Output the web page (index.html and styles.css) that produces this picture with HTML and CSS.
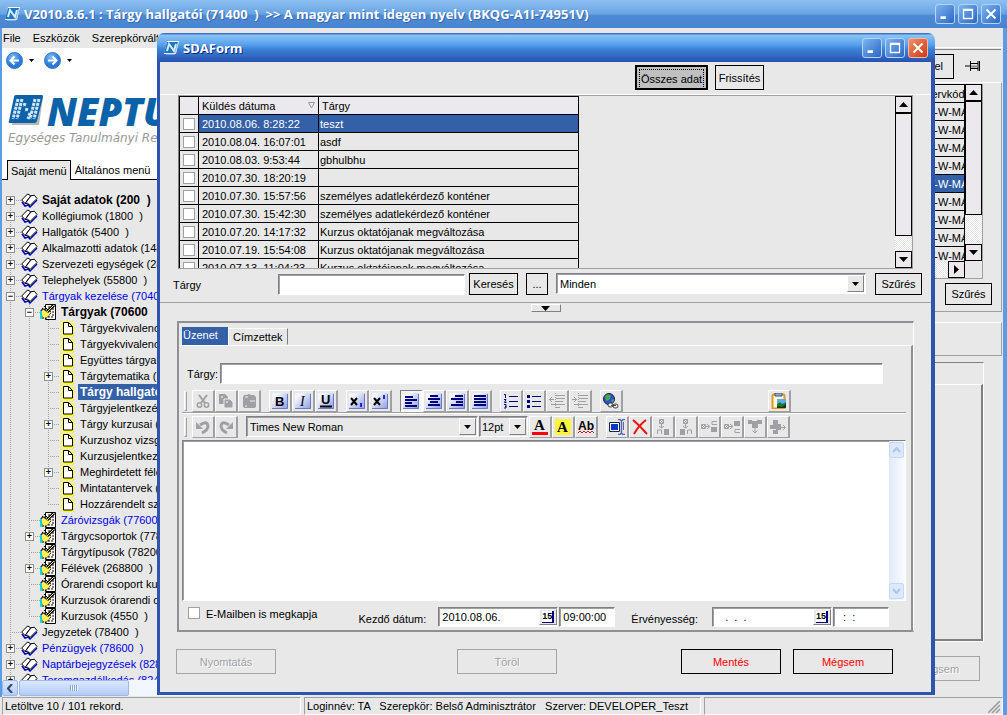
FILE: index.html
```html
<!DOCTYPE html>
<html lang="hu">
<head>
<meta charset="utf-8">
<title>Neptun – Tárgy hallgatói</title>
<link rel="stylesheet" href="styles.css">
</head>
<body>
<svg class="defs" aria-hidden="true">
  <symbol id="logo" viewBox="0 0 16 14"><path d="M4 0h12l-3 13H1z" fill="#fff"/><path d="M4 1h11l-3 11H1z" fill="#1c78c0"/><path d="M4 10l2-7 5 7 2-7" stroke="#d8ecff" stroke-width="2" fill="none"/><path d="M15 2l-3 11H3" stroke="#bcd" fill="none"/></symbol>
  <symbol id="book" viewBox="0 0 17 16"><path d="M1 10l3 4 3-1 2 2 7-7" stroke="#0000d0" stroke-width="1.500" fill="none"/><path d="M.7 8L6.500 2l3.300 1.800L4 11.500z" fill="#fff" stroke="#000"/><path d="M10 3.800l3.300-.6L16 6.500 9 13.500 4.500 11z" fill="#fff" stroke="#000"/><path d="M4 11.500l2.500-.2L9 13.500" stroke="#000" fill="none"/></symbol>
  <symbol id="page" viewBox="0 0 17 16"><path d="M1 0l3 3M8 0v2M14 0l-2 3M1 5h3M0 10h4M14 8h3M13 13l3 3M1 16l3-3M14 4l2-1M4 15.500h9" stroke="#ff0" fill="none"/><path d="M4.500 2.500H9.500l4 4v7.500H4.500z" fill="#fff" stroke="#ff0" stroke-width="2.500" stroke-dasharray="3 1"/><path d="M4.500 2.500H9.500l4 4v7.500H4.500zM9.500 2.500V6.500h4" fill="#fff" stroke="#000"/></symbol>
  <symbol id="hand" viewBox="0 0 17 16"><path d="M5.500.5h10v15h-10z" fill="#fff" stroke="#000"/><path d="M8 3h2m2 0h2M12 5h2M12 8h2M11 13h2M8 13h2M12 11h2" stroke="#000"/><path d="M1 6l4-1 5 2 1 2-4 5H2z" fill="#ffef60" stroke="#000" stroke-dasharray="2 1"/><path d="M14 1L7 8" stroke="#000" stroke-width="3"/><path d="M14 1L7 8" stroke="#ffef60"/><path d="M0 7h2v8H0z" fill="#00d8d8"/><path d="M2 4l4 3M4 2l4 4" stroke="#000"/></symbol>
  <symbol id="down" viewBox="0 0 9 5"><path d="M0 0h9L4.500 5z"/></symbol>
  <symbol id="up" viewBox="0 0 9 5"><path d="M0 5h9L4.500 0z"/></symbol>
  <symbol id="tile" viewBox="0 0 16 16"><rect width="16" height="16" rx="1" fill="url(#tg)"/><path d="M0 15.500h15.500V1" stroke="#6878c8" fill="none"/></symbol>
  <linearGradient id="tg" x2="1" y2="1"><stop offset=".2" stop-color="#f4f6ff"/><stop offset="1" stop-color="#8c9ce0"/></linearGradient>
  <radialGradient id="ball" cx=".4" cy=".3"><stop stop-color="#7cc0f8"/><stop offset="1" stop-color="#2c78d8"/></radialGradient>
</svg>

<div class="app">
  <header class="titlebar app-title">
    <svg class="logo"><use href="#logo"/></svg>
    <h1>V2010.8.6.1 : Tárgy hallgatói (71400  )  &gt;&gt; A magyar mint idegen nyelv (BKQG-A1I-74951V)</h1>
    <div class="winbtns">
      <button aria-label="Kis méret"><svg viewBox="0 0 20 20"><path d="M5 14h6" stroke="#fff" stroke-width="3"/></svg></button>
      <button aria-label="Teljes méret"><svg viewBox="0 0 20 20"><path d="M5 5h10v10H5zM5 6h10" stroke="#fff" stroke-width="1.500" fill="none"/></svg></button>
      <button aria-label="Bezárás"><svg viewBox="0 0 20 20"><path d="M5 5l10 10M15 5L5 15" stroke="#fff" stroke-width="2"/></svg></button>
    </div>
  </header>

  <div class="workspace">
    <aside class="side">
      <nav class="menubar"><button>File</button><button>Eszközök</button><button>Szerepkörváltás</button></nav>
      <div class="brandarea">
        <div class="navbtns">
          <button aria-label="Vissza"><svg width="17" height="17" viewBox="0 0 17 17"><circle cx="8.500" cy="8.500" r="8" fill="url(#ball)" stroke="#3c78c8"/><path d="M13 8.500H5M8.500 4.500l-4 4 4 4" stroke="#fff" stroke-width="2" fill="none"/></svg></button>
          <svg class="caret"><use href="#down"/></svg>
          <button aria-label="Előre"><svg width="17" height="17" viewBox="0 0 17 17"><circle cx="8.500" cy="8.500" r="8" fill="url(#ball)" stroke="#3c78c8"/><path d="M4 8.500h8M8.500 4.500l4 4-4 4" stroke="#fff" stroke-width="2" fill="none"/></svg></button>
          <svg class="caret"><use href="#down"/></svg>
        </div>
        <div class="brand">
          <svg width="36" height="32" viewBox="0 0 36 32"><path d="M9 2h26l-4 28H4z" fill="#b8b8b8"/><path d="M8 0h26q1 0 1 2l-6 24q-1 2-2 2H2q-2 0-1-2L6 2q0-2 2-2z" fill="#0b62a8"/><path d="M10 4L5 24M14 4L9 24M17 8l-1 4M19 13l-1 4M22 18l-2 6M27 4l-5 20M31 4l-5 20" stroke="#cfe6f8" stroke-width="3" stroke-dasharray="3 1"/></svg>
          <span>NEPTUN</span>
        </div>
        <p class="slogan">Egységes Tanulmányi Re</p>
        <div class="sidetabs"><button class="on">Saját menü</button><button>Általános menü</button></div>
      </div>
      <ul class="tree">
        <li><div class="row"><i class="exp">+</i><svg><use href="#book"/></svg><b>Saját adatok (200  )</b></div></li>
        <li><div class="row"><i class="exp">+</i><svg><use href="#book"/></svg><span>Kollégiumok (1800  )</span></div></li>
        <li><div class="row"><i class="exp">+</i><svg><use href="#book"/></svg><span>Hallgatók (5400  )</span></div></li>
        <li><div class="row"><i class="exp">+</i><svg><use href="#book"/></svg><span>Alkalmazotti adatok (148</span></div></li>
        <li><div class="row"><i class="exp">+</i><svg><use href="#book"/></svg><span>Szervezeti egységek (28</span></div></li>
        <li><div class="row"><i class="exp">+</i><svg><use href="#book"/></svg><span>Telephelyek (55800  )</span></div></li>
        <li><div class="row"><i class="exp">−</i><svg><use href="#book"/></svg><span class="blue">Tárgyak kezelése (7040</span></div>
          <ul>
            <li><div class="row"><i class="exp">−</i><svg><use href="#hand"/></svg><b>Tárgyak (70600</b></div>
              <ul>
                <li><div class="row"><i></i><svg><use href="#page"/></svg><span>Tárgyekvivalenc</span></div></li>
                <li><div class="row"><i></i><svg><use href="#page"/></svg><span>Tárgyekvivalenc</span></div></li>
                <li><div class="row"><i></i><svg><use href="#page"/></svg><span>Együttes tárgyak</span></div></li>
                <li><div class="row"><i class="exp">+</i><svg><use href="#page"/></svg><span>Tárgytematika (7</span></div></li>
                <li><div class="row"><i></i><svg><use href="#page"/></svg><b class="sel">Tárgy hallgató</b></div></li>
                <li><div class="row"><i></i><svg><use href="#page"/></svg><span>Tárgyjelentkezés</span></div></li>
                <li><div class="row"><i class="exp">+</i><svg><use href="#page"/></svg><span>Tárgy kurzusai (7</span></div></li>
                <li><div class="row"><i></i><svg><use href="#page"/></svg><span>Kurzushoz vizsg</span></div></li>
                <li><div class="row"><i></i><svg><use href="#page"/></svg><span>Kurzusjelentkeze</span></div></li>
                <li><div class="row"><i class="exp">+</i><svg><use href="#page"/></svg><span>Meghirdetett félé</span></div></li>
                <li><div class="row"><i></i><svg><use href="#page"/></svg><span>Mintatantervek (</span></div></li>
                <li><div class="row"><i></i><svg><use href="#page"/></svg><span>Hozzárendelt sze</span></div></li>
              </ul>
            </li>
            <li><div class="row"><i></i><svg><use href="#hand"/></svg><span class="blue">Záróvizsgák (77600</span></div></li>
            <li><div class="row"><i class="exp">+</i><svg><use href="#hand"/></svg><span>Tárgycsoportok (778</span></div></li>
            <li><div class="row"><i></i><svg><use href="#hand"/></svg><span>Tárgytípusok (78200</span></div></li>
            <li><div class="row"><i class="exp">+</i><svg><use href="#hand"/></svg><span>Félévek (268800  )</span></div></li>
            <li><div class="row"><i></i><svg><use href="#hand"/></svg><span>Órarendi csoport kur</span></div></li>
            <li><div class="row"><i></i><svg><use href="#hand"/></svg><span>Kurzusok órarendi cs</span></div></li>
            <li><div class="row"><i></i><svg><use href="#hand"/></svg><span>Kurzusok (4550  )</span></div></li>
          </ul>
        </li>
        <li><div class="row"><i></i><svg><use href="#book"/></svg><span>Jegyzetek (78400  )</span></div></li>
        <li><div class="row"><i class="exp">+</i><svg><use href="#book"/></svg><span class="blue">Pénzügyek (78600  )</span></div></li>
        <li><div class="row"><i class="exp">+</i><svg><use href="#book"/></svg><span class="blue">Naptárbejegyzések (828</span></div></li>
        <li><div class="row"><i class="exp">+</i><svg><use href="#book"/></svg><span class="blue">Teremgazdálkodás (824</span></div></li>
      </ul>
      <div class="hscroll">
        <button aria-label="Balra"><svg width="6" height="9" viewBox="0 0 6 9"><path d="M5 0L1 4.500l4 4.500" stroke="#34456c" stroke-width="2" fill="none"/></svg></button>
        <div class="thumb"></div>
      </div>
    </aside>

    <main class="back">
      <div class="back-tools"><button class="flat">Excel</button><svg width="16" height="12" viewBox="0 0 16 12"><path d="M0 6h5M5.500 1v10M5 3.500h8M5 8.500h8M13 1v10M14.500 1v10" stroke="#000" fill="none"/><path d="M6 6.500h7" stroke="#888" stroke-width="2"/></svg></div>
      <div class="back-list">
        <div class="back-grid">
          <div class="back-cols">
            <table class="codes">
              <thead><tr><th>Tervkód</th></tr></thead>
              <tbody><tr><td>Y-W-MA</td></tr><tr><td>Y-W-MA</td></tr><tr><td>Y-W-MA</td></tr><tr><td>Y-W-MA</td></tr><tr class="sel"><td>Y-W-MA</td></tr><tr><td>Y-W-MA</td></tr><tr><td>Y-W-MA</td></tr><tr><td>Y-W-MA</td></tr><tr><td>Y-W-MA</td></tr></tbody>
            </table>
            <div class="sb"><button aria-label="Fel"><svg><use href="#up"/></svg></button><div class="sbthumb long"></div><div class="track"></div><button aria-label="Le"><svg><use href="#down"/></svg></button></div>
          </div>
          <div class="back-h"><div class="track"></div><button aria-label="Jobbra"><svg class="right"><use href="#down"/></svg></button></div>
        </div>
        <button class="flat filter">Szűrés</button>
      </div>
      <div class="back-box"></div>
      <div class="back-page"><div></div></div>
      <div class="back-foot"><button class="flat" disabled>Mégsem</button></div>
    </main>
  </div>

  <footer class="status"><span class="s1">Letöltve 10 / 101 rekord.</span><span class="s2">Loginnév: TA   Szerepkör: Belső Adminisztrátor   Szerver: DEVELOPER_Teszt</span><span class="s3"><svg width="12" height="12" viewBox="0 0 12 12"><path d="M0 12L12 0M4 12l8-8M8 12l4-4" stroke="#999" stroke-width="1.500"/></svg></span></footer>
</div>

<section class="dialog" role="dialog" aria-labelledby="dlg-title">
  <header class="titlebar dlg-title">
    <svg class="logo"><use href="#logo"/></svg>
    <h2 id="dlg-title">SDAForm</h2>
    <div class="winbtns">
      <button aria-label="Kis méret"><svg viewBox="0 0 20 20"><path d="M5 14h6" stroke="#fff" stroke-width="3"/></svg></button>
      <button aria-label="Teljes méret"><svg viewBox="0 0 20 20"><path d="M5 5h10v10H5zM5 6h10" stroke="#fff" stroke-width="1.500" fill="none"/></svg></button>
      <button class="close" aria-label="Bezárás"><svg viewBox="0 0 20 20"><path d="M5 5l10 10M15 5L5 15" stroke="#fff" stroke-width="2"/></svg></button>
    </div>
  </header>

  <div class="dlg-body">
    <div class="dlg-tools"><button class="flat default"><span>Összes adat</span></button><button class="flat refresh">Frissítés</button></div>
    <div class="messages">
      <div class="mlist">
        <table>
          <colgroup><col class="c1"><col class="c2"><col class="c3"></colgroup>
          <thead><tr><th></th><th><span class="sort">Küldés dátuma <svg width="7" height="7" viewBox="0 0 7 7"><path d="M.5.5h6L3.500 6z" fill="none" stroke="#999"/></svg></span></th><th>Tárgy</th></tr></thead>
          <tbody>
            <tr class="sel"><td><input type="checkbox" aria-label="Kijelölés"></td><td>2010.08.06. 8:28:22</td><td>teszt</td></tr>
            <tr><td><input type="checkbox" aria-label="Kijelölés"></td><td>2010.08.04. 16:07:01</td><td>asdf</td></tr>
            <tr><td><input type="checkbox" aria-label="Kijelölés"></td><td>2010.08.03. 9:53:44</td><td>gbhulbhu</td></tr>
            <tr><td><input type="checkbox" aria-label="Kijelölés"></td><td>2010.07.30. 18:20:19</td><td></td></tr>
            <tr><td><input type="checkbox" aria-label="Kijelölés"></td><td>2010.07.30. 15:57:56</td><td>személyes adatlekérdező konténer</td></tr>
            <tr><td><input type="checkbox" aria-label="Kijelölés"></td><td>2010.07.30. 15:42:30</td><td>személyes adatlekérdező konténer</td></tr>
            <tr><td><input type="checkbox" aria-label="Kijelölés"></td><td>2010.07.20. 14:17:32</td><td>Kurzus oktatójanak megváltozása</td></tr>
            <tr><td><input type="checkbox" aria-label="Kijelölés"></td><td>2010.07.19. 15:54:08</td><td>Kurzus oktatójanak megváltozása</td></tr>
            <tr><td><input type="checkbox" aria-label="Kijelölés"></td><td>2010.07.13. 11:04:23</td><td>Kurzus oktatójanak megváltozása</td></tr>
          </tbody>
        </table>
      </div>
      <div class="sb"><button aria-label="Fel"><svg><use href="#up"/></svg></button><div class="sbthumb"></div><div class="track"></div><button aria-label="Le"><svg><use href="#down"/></svg></button></div>
    </div>

    <div class="search">
      <label for="q">Tárgy</label>
      <input id="q" class="sunken" type="text">
      <button class="flat find">Keresés</button>
      <button class="flat dots">...</button>
      <div class="combo sunken"><select aria-label="Szűrő"><option>Minden</option></select><span class="drop"><svg><use href="#down"/></svg></span></div>
      <button class="flat filter">Szűrés</button>
    </div>
    <button class="splitter" aria-label="Panel összecsukása"><svg><use href="#down"/></svg></button>

    <div class="tabs">
      <div class="tabrow" role="tablist"><button role="tab" aria-selected="true" class="on">Üzenet</button><button role="tab" aria-selected="false">Címzettek</button></div>
      <div class="page">
        <div class="subject"><label for="subj">Tárgy:</label><input id="subj" class="sunken" type="text"></div>
        <div class="tools">
          <i class="grip"></i>
          <div class="grp">
            <button disabled aria-label="Kivágás"><svg viewBox="0 0 16 16"><path d="M4 2l6 8M12 2L6 10" stroke="#a0a0a4" stroke-width="2"/><circle cx="4.500" cy="12" r="2.200" fill="none" stroke="#a0a0a4" stroke-width="1.500"/><circle cx="11.500" cy="12" r="2.200" fill="none" stroke="#a0a0a4" stroke-width="1.500"/></svg></button>
            <button disabled aria-label="Másolás"><svg viewBox="0 0 16 16"><path d="M1 1h6l3 3v7H1z" fill="#a0a0a4"/><path d="M6 6h6l3 3v6H6z" fill="#a0a0a4" stroke="#eee"/><path d="M3 4h2M8 9h2" stroke="#fff"/></svg></button>
            <button disabled aria-label="Beillesztés"><svg viewBox="0 0 16 16"><path d="M3 2h3q2-2 4 0h3l2 2v9q0 2-2 2H4q-2 0-2-2V4z" fill="#a0a0a4"/><path d="M4 4h3M9 8h5M4 13h2" stroke="#eee"/></svg></button>
          </div>
          <div class="grp">
            <button aria-label="Félkövér"><svg viewBox="0 0 16 16"><use href="#tile"/><text x="3" y="13" class="g gb">B</text></svg></button>
            <button aria-label="Dőlt"><svg viewBox="0 0 16 16"><use href="#tile"/><text x="5" y="13" class="g gi">I</text></svg></button>
            <button aria-label="Aláhúzott"><svg viewBox="0 0 16 16"><use href="#tile"/><text x="3" y="11" class="g gb">U</text><path d="M2 13.500h12" stroke="#000" stroke-width="2"/></svg></button>
          </div>
          <div class="grp">
            <button aria-label="Alsó index"><svg viewBox="0 0 16 16"><use href="#tile"/><path d="M2 5l6 7M8 5l-6 7" stroke="#000" stroke-width="2"/><path d="M12 10v4" stroke="#22f" stroke-width="2"/></svg></button>
            <button aria-label="Felső index"><svg viewBox="0 0 16 16"><use href="#tile"/><path d="M2 5l6 7M8 5l-6 7" stroke="#000" stroke-width="2"/><path d="M12 2v4" stroke="#22f" stroke-width="2"/></svg></button>
          </div>
          <div class="grp">
            <button class="pressed" aria-label="Balra"><svg viewBox="0 0 16 16"><use href="#tile"/><path d="M2 4h8M2 7h12M2 10h7M2 13h12" stroke="#000080" stroke-width="2"/></svg></button>
            <button aria-label="Középre"><svg viewBox="0 0 16 16"><use href="#tile"/><path d="M4 3h8M2 6h12M4 9h8M2 12h12" stroke="#000080" stroke-width="2"/></svg></button>
            <button aria-label="Jobbra"><svg viewBox="0 0 16 16"><use href="#tile"/><path d="M6 3h8M2 6h12M7 9h7M2 12h12" stroke="#000080" stroke-width="2"/></svg></button>
            <button aria-label="Sorkizárt"><svg viewBox="0 0 16 16"><use href="#tile"/><path d="M2 3h12M2 6h12M2 9h12M2 12h12" stroke="#000080" stroke-width="2"/></svg></button>
          </div>
          <div class="grp">
            <button aria-label="Számozott lista"><svg viewBox="0 0 16 16"><path d="M6 3.500h9M6 8.500h9M6 13.500h9" stroke="#000080"/><path d="M1 1.500h1.500V5M1 6.500h2L1.500 9.500h2M1 11.500h2V15H1M2 13.500h1" stroke="#000080" fill="none"/></svg></button>
            <button aria-label="Felsorolás"><svg viewBox="0 0 16 16"><path d="M6 3.500h9M6 8.500h9M6 13.500h9" stroke="#000080"/><path d="M1 2h3v3H1zM1 7h3v3H1zM1 12h3v3H1z" fill="#000080"/></svg></button>
            <button disabled aria-label="Behúzás csökkentése"><svg viewBox="0 0 16 16"><path d="M7 2.500h9M7 5.500h9M7 8.500h7M2 11.500h14M7 14.500h4M0 6.500h5M3 4L.5 6.500 3 9" stroke="#a0a0a4" fill="none"/><path d="M6.500 0v16" stroke="#a0a0a4" stroke-dasharray="1 1"/></svg></button>
            <button disabled aria-label="Behúzás növelése"><svg viewBox="0 0 16 16"><path d="M7 2.500h9M7 5.500h9M7 8.500h7M2 11.500h14M7 14.500h4M0 6.500h5M2 4l2.500 2.500L2 9" stroke="#a0a0a4" fill="none"/><path d="M6.500 0v16" stroke="#a0a0a4" stroke-dasharray="1 1"/></svg></button>
          </div>
          <div class="grp">
            <button aria-label="Hivatkozás"><svg viewBox="0 0 16 16"><circle cx="6" cy="6" r="5.500" fill="#3050d0" stroke="#224"/><path d="M2 3q4-3 6 0l-2 4-3 1zM8 7l3-1-1 4z" fill="#40b040"/><rect x="5" y="10" width="5" height="4" rx="2" fill="#eee" stroke="#444"/><rect x="10" y="11" width="5" height="4" rx="2" fill="#eee" stroke="#444"/><path d="M8 12.500h5" stroke="#444"/></svg></button>
          </div>
          <div class="grp last">
            <button aria-label="Kép beillesztése"><svg viewBox="0 0 16 16"><rect x="1.500" y="1.500" width="12" height="14" rx="1" fill="#fff8dc" stroke="#e09820" stroke-width="2"/><path d="M4 0h7v3H4z" fill="#8cb0d8" stroke="#456"/><path d="M6 6h9v9H6z" fill="#58b0f0"/><path d="M6 15v-4l3-2 2 2 4-2v6z" fill="#207830"/><path d="M6 15v-2l5 1 4-3v4z" fill="#123a18"/></svg></button>
          </div>
        </div>
        <div class="tools second">
          <i class="grip"></i>
          <div class="grp">
            <button disabled aria-label="Visszavonás"><svg viewBox="0 0 16 16"><path d="M5 6q7-5 8 1 0 4-6 7" stroke="#a0a0a4" stroke-width="3" fill="none"/><path d="M1 3v7h7z" fill="#a0a0a4"/></svg></button>
            <button disabled aria-label="Ismét"><svg viewBox="0 0 16 16"><path d="M11 6Q4 1 3 7q0 4 6 7" stroke="#a0a0a4" stroke-width="3" fill="none"/><path d="M15 3v7H8z" fill="#a0a0a4"/></svg></button>
          </div>
          <div class="combo sunken font"><select aria-label="Betűtípus"><option>Times New Roman</option></select><span class="drop"><svg><use href="#down"/></svg></span></div>
          <div class="combo sunken size"><select aria-label="Méret"><option>12pt</option></select><span class="drop"><svg><use href="#down"/></svg></span></div>
          <div class="grp">
            <button aria-label="Betűszín"><svg viewBox="0 0 16 16"><text x="2" y="11" class="g gs">A</text><path d="M0 14.500h16" stroke="#f00" stroke-width="3"/></svg></button>
            <button aria-label="Kiemelés"><svg viewBox="0 0 16 16"><path d="M0 0h16v16H0z" fill="#fff43c"/><text x="2" y="13" class="g gs">A</text></svg></button>
            <button aria-label="Helyesírás"><svg viewBox="0 0 16 16"><text x="0" y="11" class="g ab">Ab</text><path d="M0 14l2-2 2 2 2-2 2 2 2-2 2 2 2-2 2 2" stroke="#f00" fill="none"/></svg></button>
          </div>
          <div class="grp cells">
            <button aria-label="Táblázat"><svg viewBox="0 0 16 16"><path d="M.5 3.500h10v9H.5z" fill="#fff" stroke="#224"/><path d="M2 5h7v6H2z" fill="#0038c8"/><path d="M9 .5h2l1.500 1.500L14 .5h2M12.500 2v12M9 15.500h2l1.500-1.500 1.500 1.500h2" fill="none" stroke="#5668b0" stroke-width="1.500"/><path d="M14.500 3v8" stroke="#5668b0"/></svg></button>
            <button aria-label="Törlés"><svg viewBox="0 0 16 16"><path d="M1 1q6 5 14 14M14 1Q7 6 2 15" stroke="#e81010" stroke-width="2" fill="none"/></svg></button>
            <button disabled aria-label="Sor fölé"><svg viewBox="0 0 16 16"><path d="M4.500.5h4v4h-4zM5 1l3 3M8 1L5 4M6.500 5v4M4 7l2.500 2L9 7M2.500 15v-4h4v4" stroke="#a0a0a4" fill="none"/><path d="M9 10h5v6H9z" fill="#a0a0a4"/></svg></button>
            <button disabled aria-label="Sor alá"><svg viewBox="0 0 16 16"><path d="M5.500.5h4v4h-4zM6 1l3 3M9 1L6 4M7.500 5v4M5 7l2.500 2L10 7M9.500 15v-4h4v4" stroke="#a0a0a4" fill="none"/><path d="M2 10h5v6H2z" fill="#a0a0a4"/></svg></button>
            <button disabled aria-label="Oszlop elé"><svg viewBox="0 0 16 16"><path d="M.5 5.500h4v4h-4zM1 6l3 3M4 6L1 9M4 7.500h4M6 5l3 2.500L6 10M16 2.500h-5v3h5" stroke="#a0a0a4" fill="none"/><path d="M10 8h6v5h-6z" fill="#a0a0a4"/></svg></button>
            <button disabled aria-label="Oszlop mögé"><svg viewBox="0 0 16 16"><path d="M.5 5.500h4v4h-4zM1 6l3 3M4 6L1 9M4 7.500h4M6 5l3 2.500L6 10M16 10.500h-5v3h5" stroke="#a0a0a4" fill="none"/><path d="M10 2h6v5h-6z" fill="#a0a0a4"/></svg></button>
            <button disabled aria-label="Cellák egyesítése"><svg viewBox="0 0 16 16"><path d="M1 1h4v1h5V1h5v4h-4v4H5V5H1z" fill="#a0a0a4"/><path d="M8 9v5M5.500 11.500L8 14l2.500-2.500" stroke="#a0a0a4" fill="none"/></svg></button>
            <button disabled aria-label="Cellák felosztása"><svg viewBox="0 0 16 16"><path d="M3 1h5v4h3v6H8v4H3v-4h3v-1H0V6h3z" fill="#a0a0a4"/><path d="M11 8.500h4M13 6l2.500 2.500L13 11" stroke="#a0a0a4" fill="none"/></svg></button>
          </div>
        </div>
        <div class="editor sunken">
          <textarea aria-label="Üzenet szövege"></textarea>
          <div class="xpsb"><button aria-label="Fel"><svg width="9" height="6" viewBox="0 0 9 6"><path d="M1 5l3.500-4L8 5" stroke="#b0c4e8" stroke-width="2" fill="none"/></svg></button><button aria-label="Le"><svg width="9" height="6" viewBox="0 0 9 6"><path d="M1 1l3.500 4L8 1" stroke="#b0c4e8" stroke-width="2" fill="none"/></svg></button></div>
        </div>
        <div class="options">
          <label class="mail"><input type="checkbox">E-Mailben is megkapja</label>
          <label class="start" for="d1">Kezdő dátum:</label>
          <div class="date sunken"><input id="d1" type="text" value="2010.08.06."><button aria-label="Naptár"><span>15</span></button></div>
          <input class="time sunken" type="text" value="09:00:00" aria-label="Kezdő időpont">
          <label class="valid" for="d2">Érvényesség:</label>
          <div class="date sunken"><input id="d2" type="text" value="   .  .  ."><button aria-label="Naptár"><span>15</span></button></div>
          <input class="time sunken" type="text" value="  :  :" aria-label="Lejárat időpontja">
        </div>
      </div>
    </div>

    <div class="actions"><button class="flat" disabled>Nyomtatás</button><button class="flat" disabled>Töröl</button><button class="flat red">Mentés</button><button class="flat red">Mégsem</button></div>
  </div>
</section>
</body>
</html>
```
FILE: styles.css
```css
* { box-sizing: border-box; }
body {
  margin: 0;
  height: 100vh;
  overflow: hidden;
  font: 11px/14px "Liberation Sans", Arial, sans-serif;
  color: #000;
  background: #e8e8e8;
}
button, input, select, textarea { font: inherit; color: inherit; margin: 0; padding: 0; border: 0; border-radius: 0; background: none; }
button { white-space: nowrap; }
svg { display: block; flex: none; }
ul { list-style: none; margin: 0; padding: 0; }
table { border-collapse: collapse; table-layout: fixed; }
th { font-weight: normal; text-align: left; }
i { font-style: normal; flex: none; }
.defs { position: absolute; width: 0; height: 0; }

/* window frame */
.app { height: 100%; display: flex; flex-direction: column; }
.titlebar { display: flex; align-items: center; flex: none; height: 28px; color: #fff; }
.titlebar h1, .titlebar h2 { margin: 0; flex: 1; font: bold 13px/18px "Open Sans", "Noto Sans", sans-serif; white-space: pre; }
.app-title { padding: 0 6px 0 4px; background: linear-gradient(#8cc0f0, #68a4e4 50%, #4c8ad4 55%, #4a84d0); }
.app-title h1 { text-shadow: 1px 1px #3a68b0; }
.logo { width: 16px; height: 14px; margin-right: 4px; }
.winbtns { display: flex; gap: 3px; }
.winbtns button { width: 20px; height: 20px; border: 1px solid #b4d4f8; border-radius: 3px; background: linear-gradient(135deg, #7cb4f0, #2c66c4); }
.winbtns svg { width: 18px; height: 18px; }
.winbtns .close { background: linear-gradient(135deg, #f09070, #d03810); border-color: #f4b8a8; }
.workspace { flex: 1; min-height: 0; display: flex; border: solid #5c9ce4; border-width: 0 4px 0 2px; }

/* side panel */
.side { width: 300px; display: flex; flex-direction: column; overflow: hidden; }
.menubar { display: flex; gap: 12px; height: 20px; padding: 0 1px; flex: none; }
.brandarea { flex: none; height: 132px; background: #fff; }
.navbtns { display: flex; align-items: center; height: 24px; padding-left: 4px; }
.caret { width: 5px; height: 3px; margin: 0 10px 0 6px; }
.brand { display: flex; align-items: center; height: 36px; margin-top: 21px; padding-left: 6px; gap: 3px; color: #0b62a8; font: italic 800 38px/36px "Open Sans", sans-serif; }
.slogan { margin: 0; padding-left: 6px; font: italic 12px/18px "DejaVu Sans", sans-serif; color: #999; white-space: nowrap; }
.sidetabs { display: flex; margin-top: 13px; padding-left: 5px; height: 20px; border-bottom: 1px solid #000; }
.sidetabs button { padding: 2px 4px; height: 19px; }
.sidetabs .on { border: 1px solid #000; border-bottom: 0; background: #e8e8e8; height: 20px; padding: 1px 3px; }

/* tree */
.tree { flex: 1; min-height: 0; overflow: hidden; padding-top: 12px; }
.tree li { background: repeating-linear-gradient(#a0a0a0 0 1px, transparent 1px 2px) 8px 0/1px 100% no-repeat; }
.tree ul { margin-left: 19px; }
.tree ul > li:last-child { background-size: 1px 8px; }
.tree > li:first-child { background-position: 8px 8px; }
.row { display: flex; align-items: center; height: 16px; white-space: pre; background: repeating-linear-gradient(90deg, #a0a0a0 0 1px, transparent 1px 2px) 8px 8px/12px 1px no-repeat; }
.row i { width: 9px; height: 9px; margin: 0 4px; }
.row .exp { border: 1px solid #909090; background: #fff; font: bold 9px/7px "Liberation Sans", sans-serif; text-align: center; }
.row svg { width: 17px; height: 16px; margin: 0 2px; }
.row span, .row b { padding: 0 2px; line-height: 16px; }
.row b { font-size: 12px; }
.blue { color: #0000e8; }
.row .sel { background: #3460a8; color: #fff; }
.hscroll { flex: none; display: flex; height: 16px; background: #f2f6ff; margin-bottom: 1px; }
.hscroll button, .thumb { border: 1px solid #9cb8e8; border-radius: 2px; background: linear-gradient(#d8e8ff, #b4ccf4); }
.hscroll button { width: 16px; display: grid; place-items: center; }
.thumb { width: 110px; margin-left: 1px; display: grid; place-items: center; }
.thumb::after { content: ""; width: 8px; height: 6px; background: repeating-linear-gradient(90deg, #8ca4d0 0 1px, #eef4ff 1px 2px); }

/* shared controls */
.flat { border: 1px solid #000; padding: 0 5px; background: #e8e8e8; }
.flat:disabled { border-color: #a4a4a8; color: #a0a0a4; text-shadow: 1px 1px #fff; }
.flat.red { color: #f00; }
.sunken { border: 1px solid; border-color: #808084 #fff #fff #808084; box-shadow: inset 1px 1px #a0a0a4; background: #fff; }
.combo { display: flex; padding: 1px; }
.combo select { appearance: none; flex: 1; min-width: 0; padding-left: 2px; outline: 0; }
.drop { flex: none; width: 17px; display: grid; place-items: center; background: #e8e8e8; border: 1px solid; border-color: #fff #808084 #808084 #fff; }
.drop svg { width: 7px; height: 4px; }
.sb { flex: none; width: 17px; display: flex; flex-direction: column; }
.sb button, .back-h button { flex: none; height: 17px; width: 17px; border: 1px solid #000; background: #ebe9ee; display: grid; place-items: center; }
.sb svg, .back-h svg { width: 9px; height: 5px; }
.sbthumb { flex: 123; border: 1px solid #000; background: #ebe9ee; }
.track { flex: 15; background: repeating-conic-gradient(#fff 0 25%, #e4e4e4 0 50%) 0 0/2px 2px; }
.sbthumb.long { flex: 112; }
.long + .track { flex: 29; }

/* window behind the dialog */
.back { flex: 1; min-width: 0; display: flex; flex-direction: column; margin: 19px 0 1px; padding-top: 1px; border-top: 1px solid #fff; }
.back-tools { display: flex; justify-content: flex-end; align-items: center; gap: 11px; height: 34px; padding-right: 20px; margin-right: 2px; border-top: 1px solid #808084; border-bottom: 1px solid #fff; }
.back-tools .flat { height: 25px; padding: 0 10px; }
.back-list { height: 229px; margin-right: 1px; padding: 1px 18px 0 0; border: solid #a0a0a4; border-width: 0 1px 1px 0; display: flex; flex-direction: column; align-items: flex-end; }
.back-grid { border: solid #a0a0a4; border-width: 0 1px 1px 0; }
.back-cols { display: flex; height: 177px; overflow: hidden; }
.codes { width: 41px; }
.codes th, .codes td { height: 18px; padding: 0 1px; border: 1px solid #000; overflow: hidden; white-space: nowrap; line-height: 14px; }
.codes td { padding-left: 3px; }
.codes .sel td { background: #3460a8; color: #fff; }
.back-h { display: flex; padding-right: 17px; }
.back-h svg { transform: rotate(-90deg); }
.back-list .filter { margin: 4px -9px 0 0; }
.filter { width: 47px; height: 22px; padding: 0; }
.back-box { height: 34px; margin: 10px 1px 0 0; border: 1px solid; border-color: #fff #a0a0a4 #a0a0a4 #fff; }
.back-page { flex: 1; margin: 6px 19px 0 0; padding-top: 21px; border: 1px solid; border-color: #808084 #fff #fff #808084; }
.back-page div { height: 100%; border: solid #808084; border-width: 0 2px 2px 0; border-top: 1px solid #fff; }
.back-foot { display: flex; justify-content: flex-end; height: 54px; padding: 14px 23px 0 0; }
.back-foot .flat { width: 84px; height: 25px; }

/* status bar */
.status { display: flex; gap: 3px; flex: none; height: 18px; padding-left: 2px; border-right: 4px solid #5c9ce4; }
.status span { border: 1px solid; border-color: #a0a0a4 #fff #fff #a0a0a4; padding: 1px 2px; white-space: pre; }
.status .s1 { width: 299px; }
.status .s2 { width: 397px; }
.status .s3 { flex: 1; display: flex; justify-content: flex-end; align-items: flex-end; }

/* dialog */
.dialog { position: absolute; inset: 33px 72px 20px 157px; display: flex; flex-direction: column; border-radius: 7px 7px 0 0; background: #e8e8e8; overflow: hidden; }
.dlg-title { height: 29px; padding: 0 7px 0 6px; background: linear-gradient(#3c74cc 0 1px, #8cc4f4 2px, #58a0ec 40%, #3c84d8 55%, #2850b0); }
.dlg-title h2 { text-shadow: 1px 1px #0c2880; }
.dlg-body { flex: 1; min-height: 0; display: flex; flex-direction: column; border: 3px solid #2c54b0; border-top: 0; border-right-width: 4px; }
.dlg-tools { display: flex; justify-content: flex-end; gap: 7px; height: 33px; padding: 3px 167px 4px 0; border-bottom: 1px solid #fff; flex: none; }
.default { width: 73px; border-width: 2px; background: #c0c0c0; padding: 2px; }
.default span { display: block; padding: 2px 0; border: 1px dotted #000; }
.refresh { width: 49px; padding: 0; }
.messages { flex: none; display: flex; height: 174px; margin: 0 18px; border: 1px solid #a0a0a4; border-left-color: #808084; }
.mlist { flex: 1; overflow: hidden; }
.mlist table { width: 400px; }
.c1 { width: 19px; }
.c2 { width: 120px; }
.mlist th, .mlist td { height: 18px; padding: 0 3px; border: 1px solid #000; line-height: 14px; white-space: nowrap; }
.mlist th { background: #ebe9ee; }
.mlist td:nth-child(3) { padding-left: 1px; }
.mlist .sel td + td { background: #3460a8; color: #fff; }
.sort { display: flex; justify-content: space-between; align-items: center; }
input[type=checkbox] { appearance: none; display: block; width: 12px; height: 12px; border: 1px solid #a0a0a4; background: #fff; }
.search { flex: none; display: flex; height: 34px; padding: 4px 9px 0 13px; border-bottom: 1px solid #a0a0a4; }
.search label { width: 105px; padding-top: 5px; }
.search > input { width: 187px; height: 21px; margin: 1px 4px 0 0; }
.search .flat { height: 22px; }
.search .find { width: 49px; padding: 0; }
.search .dots { width: 22px; margin: 0 8px; }
.search .combo { flex: 1; height: 21px; margin-right: 9px; }
.splitter { flex: none; align-self: center; width: 30px; height: 8px; margin-top: 1px; border: 1px solid; border-color: #fff #808084 #808084 #fff; display: grid; place-items: center; }
.splitter svg { width: 11px; height: 5px; }
.tabs { flex: 1; min-height: 0; display: flex; flex-direction: column; margin: 9px 17px 0; padding: 4px 0 0; border: 2px solid #909094; border-right: 1px solid #fff; }
.tabrow { display: flex; align-items: flex-end; height: 18px; padding-left: 3px; }
.tabrow button { height: 17px; padding: 1px 4px; border: 1px solid; border-color: #fff #808084 transparent #fff; }
.tabrow .on { width: 46px; height: 18px; padding: 0 1px 3px; background: #3460a8; color: #fff; border: 0; text-align: left; }
.page { flex: 1; min-height: 0; display: flex; flex-direction: column; padding: 17px 5px 0 3px; border-top: 1px solid #fff; border-right: 2px solid #909094; }
.subject { display: flex; align-items: center; padding: 0 23px 0 5px; gap: 2px; }
.subject input { flex: 1; height: 21px; }
.tools { display: flex; flex: none; gap: 8px; height: 29px; padding: 6px 0 0 2px; border-bottom: 1px solid #a0a0a4; box-shadow: 0 1px #fff; }
.tools.second { height: 27px; padding-top: 3px; border: 0; box-shadow: none; }
.grip { width: 3px; height: 20px; margin: 1px -4px 0 0; border: 1px solid; border-color: #fff #a0a0a4 #a0a0a4 #fff; }
.grip + .grp { margin-left: 1px; }
.grp { display: flex; flex: none; }
.grp button { width: 23px; height: 22px; display: grid; place-items: center; border: solid; border-width: 1px 2px 1px 1px; border-color: #fff #a0a0a4 #a0a0a4 #fff; }
.grp button svg { width: 16px; height: 16px; }
.grp .pressed { border-color: #808084 #fff #fff #808084; background: #f4f4f4; }
.grp.last { margin-left: 137px; }
.g { font: bold 13px "Liberation Sans", sans-serif; fill: #000; }
.gi { font: italic 14px "Liberation Serif", serif; }
.gs { font: bold 15px "Liberation Serif", serif; }
.ab { font-size: 12px; }
.font { width: 232px; }
.size { width: 49px; margin-left: -7px; }
.size select { padding-left: 1px; }
.font, .size { height: 21px; background: #e8e8e8; }
.size + .grp { margin-left: -7px; }
.editor { flex: 1; min-height: 0; display: flex; }
.editor textarea { flex: 1; resize: none; outline: 0; margin: 1px; font: 16px "Liberation Serif", serif; }
.xpsb { width: 16px; display: flex; flex-direction: column; justify-content: space-between; padding: 1px 0; background: linear-gradient(90deg, #dfeaff, #fafcff); }
.xpsb button { width: 15px; height: 16px; border: 1px solid #c8d8f4; border-radius: 2px; background: #dce8fc; display: grid; place-items: center; }
.options { display: flex; flex: none; height: 29px; padding: 6px 17px 0 6px; }
.mail { display: flex; gap: 6px; height: 14px; }
.start { margin: 5px 12px 0 auto; }
.valid { margin: 5px 14px 0 16px; }
.date { display: flex; width: 120px; height: 20px; }
.date input { flex: 1; min-width: 0; padding-left: 3px; white-space: pre; }
.date button { width: 18px; margin: 1px 0; background: #e8e8e8; border: 1px solid; border-color: #fff #808084 #808084 #fff; }
.date button span { display: block; margin: 1px 2px; border: solid #000080; border-width: 0 2px 1px 0; background: #fff; font: bold 9px/11px "Liberation Sans", sans-serif; }
.time { width: 56px; height: 20px; margin-left: 1px; padding-left: 3px; }
.actions { flex: none; display: flex; height: 60px; padding: 17px 38px 0 16px; gap: 12px; }
.actions .flat { width: 100px; height: 25px; }
.actions .flat:nth-child(2) { margin: 0 112px 0 auto; }
```
